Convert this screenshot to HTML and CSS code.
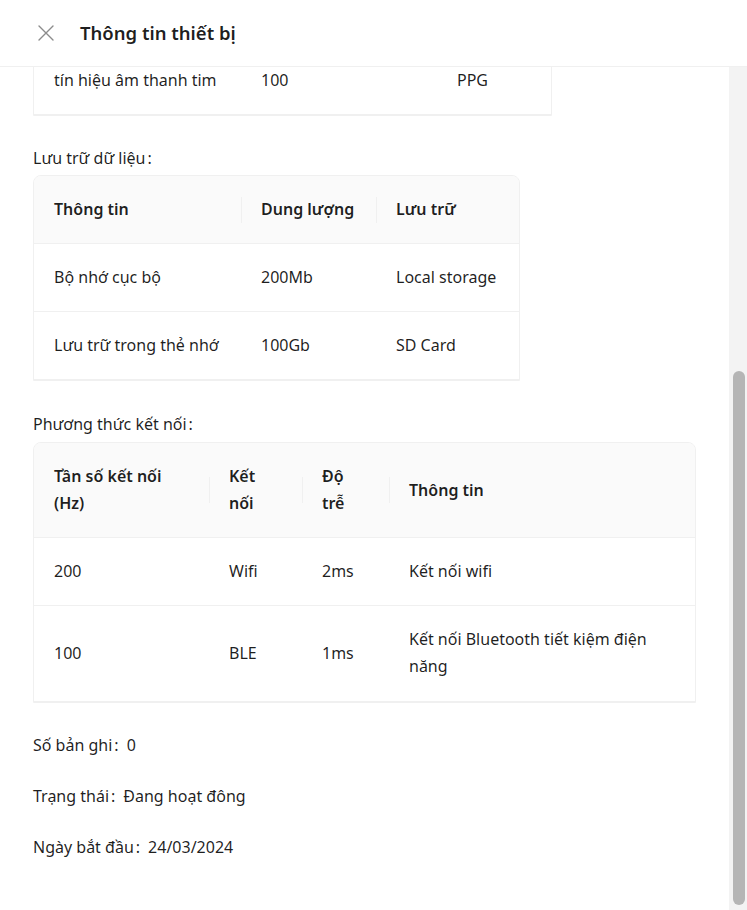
FILE: index.html
```html
<!DOCTYPE html>
<html lang="vi">
<head>
<meta charset="utf-8">
<title>Thông tin thiết bị</title>
<link rel="stylesheet" href="styles.css">
</head>
<body>
<div class="drawer">
  <header class="drawer-header">
    <button class="close" aria-label="Đóng">
      <svg width="18" height="18" viewBox="0 0 18 18"><path d="M2 2L16 16M16 2L2 16" stroke="#8c8c8c" stroke-width="1.4" fill="none" stroke-linecap="round"/></svg>
    </button>
    <h1 class="title">Thông tin thiết bị</h1>
  </header>
  <div class="drawer-main">
    <div class="drawer-body">
      <div class="body-inner">
        <div class="tbl tbl-signal">
          <table>
            <colgroup><col class="c-s1"><col class="c-s2"><col></colgroup>
            <tbody>
              <tr><td>tín hiệu âm thanh tim</td><td>100</td><td>PPG</td></tr>
            </tbody>
          </table>
        </div>

        <div class="section-label">Lưu trữ dữ liệu</div>
        <div class="tbl tbl-storage">
          <table>
            <colgroup><col class="c-d1"><col class="c-d2"><col></colgroup>
            <thead><tr><th>Thông tin</th><th>Dung lượng</th><th>Lưu trữ</th></tr></thead>
            <tbody>
              <tr><td>Bộ nhớ cục bộ</td><td>200Mb</td><td>Local storage</td></tr>
              <tr><td>Lưu trữ trong thẻ nhớ</td><td>100Gb</td><td>SD Card</td></tr>
            </tbody>
          </table>
        </div>

        <div class="section-label section-label-conn">Phương thức kết nối</div>
        <div class="tbl tbl-conn">
          <table>
            <colgroup><col class="c-k1"><col class="c-k2"><col class="c-k3"><col></colgroup>
            <thead><tr><th>Tần số kết nối (Hz)</th><th>Kết<br>nối</th><th>Độ<br>trễ</th><th>Thông tin</th></tr></thead>
            <tbody>
              <tr><td>200</td><td>Wifi</td><td>2ms</td><td>Kết nối wifi</td></tr>
              <tr class="row-tall"><td>100</td><td>BLE</td><td>1ms</td><td>Kết nối Bluetooth tiết kiệm điện năng</td></tr>
            </tbody>
          </table>
        </div>

        <div class="field"><span class="label">Số bản ghi</span><span>0</span></div>
        <div class="field"><span class="label">Trạng thái</span><span>Đang hoạt đông</span></div>
        <div class="field"><span class="label">Ngày bắt đầu</span><span>24/03/2024</span></div>
      </div>
    </div>
    <div class="scrollbar"><div class="thumb"></div></div>
  </div>
</div>
</body>
</html>
```

FILE: styles.css
```css
html, body {
  margin: 0;
  height: 100%;
}
body {
  font-family: "Noto Sans", "Open Sans", sans-serif;
  font-size: 16px;
  color: rgba(0, 0, 0, 0.88);
  background: #fff;
}
.drawer {
  display: flex;
  flex-direction: column;
  height: 100vh;
}
.drawer-header {
  flex: none;
  height: 66px;
  border-bottom: 1px solid #f0f0f0;
  display: flex;
  align-items: center;
  padding-left: 37px;
}
.close {
  border: 0;
  background: none;
  padding: 0;
  width: 18px;
  height: 18px;
  display: flex;
  cursor: pointer;
}
.title {
  margin: 0 0 0 25px;
  font-size: 18.5px;
  font-weight: 600;
  line-height: 26px;
}
.drawer-main {
  flex: 1;
  min-height: 0;
  display: flex;
}
.drawer-body {
  flex: 1;
  min-width: 0;
  overflow: hidden;
  display: flex;
  flex-direction: column-reverse;
}
.scrollbar {
  flex: none;
  width: 18px;
  background: #f3f3f3;
}
.thumb {
  width: 12px;
  height: 534px;
  margin: 304px 0 0 4px;
  border-radius: 6px;
  background: #b5b5b5;
}
.body-inner {
  flex: none;
  padding: 0 33px 23px 33px;
}
.field {
  display: flex;
  line-height: 22px;
  margin-bottom: 29px;
}
.label::after,
.section-label::after {
  content: ":";
  margin: 0 8px 0 2px;
}
.section-label {
  line-height: 22px;
  margin-bottom: 6px;
}
.section-label-conn {
  margin-bottom: 7px;
}
.tbl {
  box-sizing: border-box;
  border: 1px solid #f0f0f0;
  border-radius: 8px 8px 0 0;
  overflow: hidden;
  margin-bottom: 31px;
}
.tbl table {
  width: 100%;
  border-collapse: separate;
  border-spacing: 0;
  table-layout: fixed;
}
.tbl th,
.tbl td {
  padding: 20px;
  line-height: 27px;
  text-align: left;
  vertical-align: middle;
  border-bottom: 1px solid #f0f0f0;
}
.tbl .row-tall td {
  padding-bottom: 21px;
}
.tbl th {
  background: #fafafa;
  font-weight: 600;
  position: relative;
}
.tbl th + th::before {
  content: "";
  position: absolute;
  left: 0;
  top: 50%;
  width: 1px;
  height: 26px;
  margin-top: -13px;
  background: #f0f0f0;
}
.tbl-signal { width: 519px; }
.c-s1 { width: 207px; }
.c-s2 { width: 196px; }
.tbl-storage { width: 487px; margin-bottom: 32px; }
.c-d1 { width: 207px; }
.c-d2 { width: 135px; }
.tbl-conn { width: 663px; }
.c-k1 { width: 175px; }
.c-k2 { width: 93px; }
.c-k3 { width: 87px; }
```
